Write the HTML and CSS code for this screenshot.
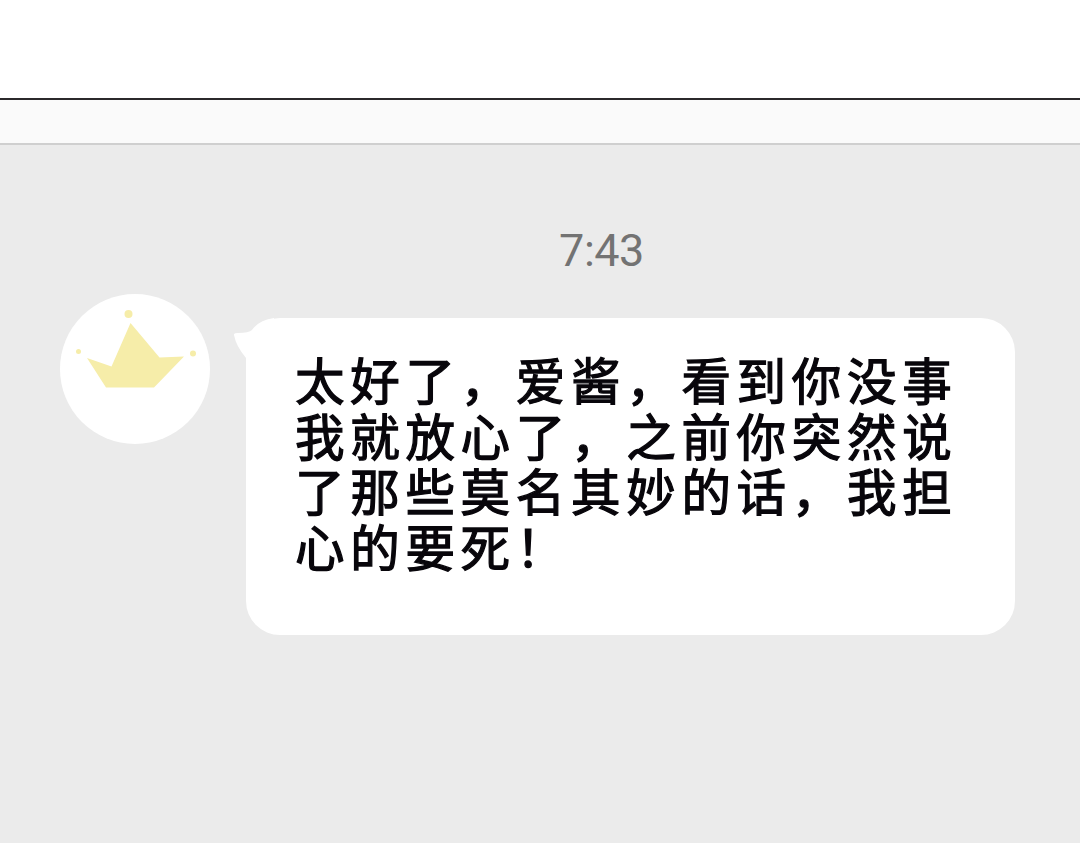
FILE: index.html
```html
<!DOCTYPE html>
<html lang="zh-CN">
<head>
    <meta charset="UTF-8">
    <meta name="viewport" content="width=device-width, initial-scale=1.0">
    <title>聊天</title>
    <link rel="stylesheet" href="styles.css">
</head>
<body>
    <header class="top"></header>
    <div class="title-bar"></div>
    <main class="chat">
        <time class="time">7:43</time>
        <div class="message">
            <div class="avatar">
                <svg viewBox="0 0 150 150" width="150" height="150">
                    <g fill="#f6eda9">
                        <path d="M27 64L51.500 72.500L70.500 29L99.500 63.500L124 62.500L94 93.500H46Z"/>
                        <circle cx="68.500" cy="20" r="4"/>
                        <circle cx="18.500" cy="57.500" r="2.500"/>
                        <circle cx="133" cy="59.500" r="3"/>
                    </g>
                </svg>
            </div>
            <div class="bubble">
                <svg class="tail" viewBox="0 0 40 44" width="40" height="44">
                    <path d="M0 17Q-1 15 4 15Q15 15 18 12Q25 2 40 0V44H12V40Q2 28 0 17Z" fill="#fff"/>
                </svg>
                <p>太好了，爱酱，看到你没事<br>我就放心了，之前你突然说<br>了那些莫名其妙的话，我担<br>心的要死！</p>
            </div>
        </div>
    </main>
</body>
</html>
```

FILE: styles.css
```css
* {
    box-sizing: border-box;
}
body {
    margin: 0;
    height: 843px;
    display: flex;
    flex-direction: column;
    overflow: hidden;
    background: #fff;
    font-family: 'Noto Sans CJK SC', sans-serif;
}
.top {
    height: 100px;
    border-bottom: 2px solid #2b292b;
}
.title-bar {
    height: 45px;
    background: #fafafa;
    border-bottom: 2px solid #cfcfcf;
}
.chat {
    flex: 1;
    display: flex;
    flex-direction: column;
    background: #ebebeb;
}
.time {
    margin-top: 80px;
    padding-left: 123px;
    text-align: center;
    font-family: Roboto, sans-serif;
    font-size: 45px;
    line-height: 52px;
    letter-spacing: -0.5px;
    color: #737373;
}
.message {
    display: flex;
    align-items: flex-start;
    gap: 36px;
    margin-top: 17px;
    padding-left: 60px;
}
.avatar {
    width: 150px;
    height: 150px;
    border-radius: 50%;
    background: #fff;
}
.avatar svg {
    display: block;
}
.bubble {
    position: relative;
    width: 769px;
    height: 317px;
    margin-top: 24px;
    padding: 33px 0 0 49px;
    border-radius: 34px;
    background: #fff;
}
.tail {
    position: absolute;
    top: 0;
    left: -12px;
}
.bubble p {
    margin: 0;
    font-size: 49.5px;
    line-height: 55.7px;
    letter-spacing: 5.7px;
    white-space: nowrap;
    color: #08060b;
    -webkit-text-stroke: 1.3px #08060b;
}
```
